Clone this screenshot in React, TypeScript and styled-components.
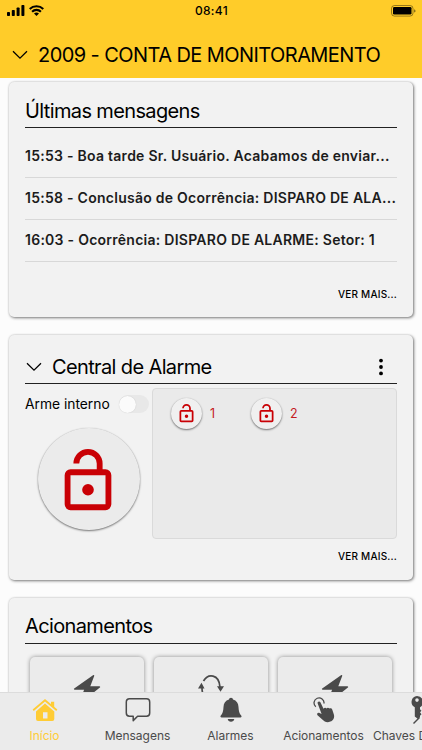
import React from "react";
import styled, { createGlobalStyle } from "styled-components";

const GlobalStyle = createGlobalStyle`
  * { box-sizing: border-box; }
  body { margin: 0; background: #fcfcfc; overflow: hidden; font-family: Inter, "Liberation Sans", sans-serif; color: #000; }
  svg { display: block; flex: none; }
`;

const Screen = styled.div`
  width: 422px;
  height: 750px;
  display: flex;
  flex-direction: column;
  overflow: hidden;
  background: #fcfcfc;
`;

const Header = styled.header`
  flex: none;
  height: 78px;
  background: #ffcc29;
`;

const StatusBar = styled.div`
  display: grid;
  grid-template-columns: 1fr auto 1fr;
  align-items: center;
  height: 21px;
  padding: 0 6px 0 7px;
`;

const StatusGroup = styled.div<{ $end?: boolean }>`
  display: flex;
  align-items: center;
  gap: 4px;
  justify-content: ${(p) => (p.$end ? "flex-end" : "flex-start")};
`;

const Clock = styled.span`
  font-size: 12px;
  font-weight: 500;
  letter-spacing: 0.35px;
`;

const AccountRow = styled.div`
  display: flex;
  align-items: center;
  gap: 10px;
  height: 30px;
  margin-top: 19px;
  padding-left: 12px;
`;

const Heading = styled.h1`
  margin: 0;
  font-size: 20px;
  line-height: 26px;
  font-weight: 400;
  white-space: nowrap;
  letter-spacing: -0.57px;
`;

const CardTitle = styled(Heading).attrs({ as: "h2" })`
  letter-spacing: -0.63px;
`;

const Content = styled.main`
  flex: 1;
  min-height: 0;
  overflow: hidden;
  display: flex;
  flex-direction: column;
  gap: 18px;
  padding: 4px 9px 0;
`;

const Card = styled.section<{ $height: number; $top?: number }>`
  flex: none;
  display: flex;
  flex-direction: column;
  height: ${(p) => p.$height}px;
  padding: ${(p) => p.$top ?? 14}px 16px 0;
  border-radius: 5px;
  background: #f2f2f2;
  box-shadow: 1px 1px 3px rgba(0, 0, 0, 0.5), 0 0 2px rgba(0, 0, 0, 0.15);
`;

const CardHeader = styled.div<{ $bottom?: number }>`
  flex: none;
  display: flex;
  align-items: center;
  gap: 10px;
  height: 32px;
  padding: 0 0 ${(p) => p.$bottom ?? 1}px;
  border-bottom: 1px solid #222;
`;

const ExpandButton = styled.button`
  margin-left: 1px;
  padding: 0;
  border: 0;
  background: none;
`;

const MenuButton = styled.button`
  margin-left: auto;
  padding: 0 14px 0 0;
  border: 0;
  background: none;
`;

const MessageList = styled.ul`
  margin: 8px 0 0;
  padding: 0;
  list-style: none;
`;

const Message = styled.li`
  height: 42px;
  line-height: 39px;
  border-bottom: 1px solid #d8d8d8;
  font-size: 14px;
  font-weight: 600;
  letter-spacing: 0.26px;
  color: #1c1c1c;
  white-space: nowrap;
`;

const MoreLink = styled.button<{ $top: number }>`
  align-self: flex-end;
  margin-top: ${(p) => p.$top}px;
  padding: 0;
  border: 0;
  background: none;
  font: 500 10px/16px Inter, sans-serif;
  letter-spacing: 0.2px;
  color: #000;
`;

const AlarmBody = styled.div`
  display: grid;
  grid-template-columns: 127px 245px;
  height: 155px;
`;

const ArmColumn = styled.div`
  display: flex;
  flex-direction: column;
`;

const ArmRow = styled.div`
  display: flex;
  align-items: center;
  height: 20px;
  margin-top: 10px;
  font-size: 13.8px;
  white-space: nowrap;
`;

const ArmLabel = styled.span`
  width: 94px;
`;

const Toggle = styled.span`
  display: flex;
  align-items: center;
  width: 30px;
  height: 18px;
  border-radius: 9px;
  background: #e8e8e8;
`;

const Knob = styled.span`
  width: 17px;
  height: 17px;
  border-radius: 50%;
  background: #fbfbfb;
  box-shadow: 0 0 1px rgba(0, 0, 0, 0.2);
`;

const LockButton = styled.button<{ $size: number; $big?: boolean }>`
  flex: none;
  display: flex;
  align-items: center;
  justify-content: center;
  width: ${(p) => p.$size}px;
  height: ${(p) => p.$size}px;
  margin: ${(p) => (p.$big ? "14px 0 0 12.5px" : "0")};
  padding: ${(p) => (p.$big ? "3px 1px 0 0" : "0")};
  border: 0;
  border-radius: 50%;
  background: ${(p) => (p.$big ? "#ebebeb" : "#f0f0f0")};
  box-shadow: 0 1px 2px rgba(0, 0, 0, 0.5), 0 0 1px rgba(0, 0, 0, 0.15);
`;

const SectorPanel = styled.div`
  display: flex;
  align-items: flex-start;
  gap: 35px;
  height: 151px;
  margin-top: 4px;
  padding: 9px 18px;
  border: 1px solid #dadada;
  border-radius: 4px;
  background: #eaeaea;
`;

const Sector = styled.div`
  display: flex;
  align-items: center;
  gap: 8px;
  width: 45px;
  color: #c51a1f;
  font-size: 12.5px;
`;

const ActionGrid = styled.div`
  display: grid;
  grid-template-columns: repeat(3, 114px);
  gap: 10px;
  margin: 13px 0 0 5px;
`;

const ActionTile = styled.button`
  display: flex;
  justify-content: center;
  height: 90px;
  padding: 17px 0 0;
  border: 0;
  border-radius: 5px;
  background: #ebebeb;
  box-shadow: 0 0 4px rgba(0, 0, 0, 0.42);
`;

const TabBar = styled.nav`
  flex: none;
  display: grid;
  grid-template-columns: repeat(5, 93px);
  height: 58px;
  margin-left: -2px;
  border-top: 1px solid #dcdcdc;
  background: #ebebeb;
`;

const Tab = styled.a<{ $active?: boolean }>`
  display: flex;
  flex-direction: column;
  align-items: center;
  color: ${(p) => (p.$active ? "#ffcc35" : "#4a4a4a")};
`;

const TabIcon = styled.span`
  display: flex;
  align-items: center;
  height: 34px;
`;

const TabLabel = styled.span`
  height: 18px;
  line-height: 18px;
  font-size: 12px;
  letter-spacing: -0.03px;
  white-space: nowrap;
`;

const Chevron = () => (
  <svg width="16" height="10" viewBox="0 0 16 10" fill="none" stroke="#000" strokeWidth="1.25">
    <path d="M1 1.2 8 8.2 15 1.2" />
  </svg>
);

const LockIcon = ({ size }: { size: number }) => (
  <svg width={size} height={size} viewBox="0 0 24 24" fill="#c90005">
    <path d="M18 20V10H6V20H18M18 8A2 2 0 0 1 20 10V20A2 2 0 0 1 18 22H6A2 2 0 0 1 4 20V10A2 2 0 0 1 6 8H15V6A3 3 0 0 0 9 6H7A5 5 0 0 1 17 6V8H18M12 17A2 2 0 1 1 12 13A2 2 0 0 1 12 17Z" />
  </svg>
);

const SignalIcon = () => (
  <svg width="18" height="11" viewBox="0 0 18 11">
    <rect x="0" y="7" width="3" height="4" rx=".8" />
    <rect x="4.8" y="5" width="3" height="6" rx=".8" />
    <rect x="9.6" y="2.5" width="3" height="8.5" rx=".8" />
    <rect x="14.4" y="0" width="3" height="11" rx=".8" />
  </svg>
);

const WifiIcon = () => (
  <svg width="15" height="11" viewBox="0 0 15 11" fill="none" stroke="#000" strokeWidth="2.1">
    <path d="M.7 4a9.7 9.7 0 0 1 13.6 0M3.1 6.7a6.2 6.2 0 0 1 8.800 0" />
    <path d="M7.5 11 5 8.6a3.6 3.6 0 0 1 5 0Z" fill="#000" stroke="none" />
  </svg>
);

const BatteryIcon = () => (
  <svg width="25" height="12" viewBox="0 0 25 12">
    <rect x=".5" y=".5" width="21.5" height="10.6" rx="3" fill="none" stroke="#000" strokeOpacity=".5" strokeWidth=".8" />
    <rect x="2" y="2" width="18.5" height="7.6" rx="1.3" />
    <path d="M23.3 4.2v3.4c1.5-.5 1.5-2.9 0-3.4" fillOpacity=".65" />
  </svg>
);

const DotsIcon = () => (
  <svg width="4" height="18" viewBox="0 0 4 18">
    <circle cx="2" cy="2.6" r="1.9" />
    <circle cx="2" cy="9" r="1.9" />
    <circle cx="2" cy="15.4" r="1.9" />
  </svg>
);

const BoltIcon = () => (
  <svg width="28" height="30" viewBox="0 0 28 30" fill="#4a4a4a">
    <path d="M20 1.2C20.6.6 21.5 1.1 21.2 1.9L17.3 12.2H26.4C27.2 12.2 27.5 13 26.9 13.6L7.7 28.6C7 29.2 6.1 28.5 6.5 27.7L11.1 15.8H1.7C.9 15.8.6 15 1.2 14.4Z" />
  </svg>
);

const CycleIcon = () => (
  <svg width="28" height="30" viewBox="0 0 28 30" fill="none" stroke="#4a4a4a" strokeWidth="1.7">
    <path d="M6.5 7C11-.8 22-.2 23 13M5 14c0 12 12 17 18 9" />
    <path d="m1 14.5 3.5-5.8L7.5 14.5ZM20 12.300h7L23.5 17.800Z" fill="#4a4a4a" stroke="none" />
  </svg>
);

const HomeIcon = () => (
  <svg width="26" height="24" viewBox="0 0 26 24" fill="currentColor">
    <path d="M1.2 12.2 13 2.2 24.8 12.2" fill="none" stroke="currentColor" strokeWidth="1.8" />
    <path d="M19 3.7h3.2v6L19 7ZM13 5.5 22.3 13.4V21q0 2-2 2H6q-2 0-2-2v-7.6ZM11 14.2v6.3h4.5v-6.3Z" fillRule="evenodd" />
  </svg>
);

const ChatIcon = () => (
  <svg width="26" height="26" viewBox="0 0 26 26" fill="none" stroke="currentColor" strokeWidth="1.5" strokeLinejoin="round">
    <path d="M4.5 1.800h17a3.200 3.200 0 0 1 3.200 3.200v11a3.200 3.200 0 0 1-3.200 3.200H12.600L8.200 23.600v-4.400H4.500a3.200 3.200 0 0 1-3.200-3.200V5A3.200 3.200 0 0 1 4.500 1.800Z" />
  </svg>
);

const BellIcon = () => (
  <svg width="22" height="26" viewBox="0 0 22 26" fill="currentColor">
    <path d="M11 .8c1.1 0 1.9.7 2 1.8 3.6.9 5.3 3.7 5.5 7.3.2 4 .8 6.6 2.7 8.5.8.9.3 2-.8 2H1.6c-1.1 0-1.6-1.1-.8-2 1.9-1.9 2.5-4.5 2.7-8.5.2-3.6 1.9-6.4 5.5-7.3.1-1.1.9-1.8 2-1.8ZM7.7 22h6.6c-.3 1.8-1.6 2.8-3.3 2.8S8 23.8 7.7 22Z" />
  </svg>
);

const TapIcon = () => (
  <svg width="22" height="26" viewBox="0 0 22 26" fill="currentColor">
    <path d="M2.8 9.7A5 5 0 1 1 11 6.5" fill="none" stroke="currentColor" strokeWidth="1.3" />
    <path d="M4.6 6.2c-.4-1.7 2-2.6 2.8-.9l3.1 6.400c.8-1.300 2.300-1.400 3-.3.900-1 2.300-.8 2.900.2 1-.7 2.400-.2 2.900 1.100l1.500 4.500c1.100 3.500-.4 6.200-3.500 7.400-3.400 1.300-5.800.1-8-2.100l-4.800-4.300c-1.100-1.200.3-3 2-2.200l2.100 1Z" />
  </svg>
);

const KeyIcon = () => (
  <svg width="14" height="30" viewBox="0 0 14 30" fill="currentColor">
    <path fillRule="evenodd" d="M7 1a6 6 0 0 1 3 11.2v2l1.5 1.5-1.5 1.5 1.5 2-1.5 1.6v1.3L8 24l-3.2-2.5v-9.2A6 6 0 0 1 7 1Zm0 2.300a1.800 1.800 0 1 0 0 3.600 1.800 1.800 0 0 0 0-3.600Z" />
    <path d="m9.5 22.5-6 6" stroke="currentColor" strokeWidth="1.5" />
  </svg>
);

const messages = [
  "15:53 - Boa tarde Sr. Usuário. Acabamos de enviar...",
  "15:58 - Conclusão de Ocorrência: DISPARO DE ALA...",
  "16:03 - Ocorrência: DISPARO DE ALARME: Setor: 1",
];

const tabs = [
  { label: "Início", icon: <HomeIcon />, active: true },
  { label: "Mensagens", icon: <ChatIcon /> },
  { label: "Alarmes", icon: <BellIcon /> },
  { label: "Acionamentos", icon: <TapIcon /> },
  { label: "Chaves Digitais", icon: <KeyIcon /> },
];

export default function App() {
  return (
    <Screen>
      <GlobalStyle />
      <Header>
        <StatusBar>
          <StatusGroup><SignalIcon /><WifiIcon /></StatusGroup>
          <Clock>08:41</Clock>
          <StatusGroup $end><BatteryIcon /></StatusGroup>
        </StatusBar>
        <AccountRow>
          <Chevron />
          <Heading>2009 - CONTA DE MONITORAMENTO</Heading>
        </AccountRow>
      </Header>
      <Content>
        <Card $height={235}>
          <CardHeader><CardTitle>Últimas mensagens</CardTitle></CardHeader>
          <MessageList>
            {messages.map((m) => <Message key={m}>{m}</Message>)}
          </MessageList>
          <MoreLink $top={24}>VER MAIS...</MoreLink>
        </Card>
        <Card $height={245} $top={17}>
          <CardHeader>
            <ExpandButton aria-label="Recolher"><Chevron /></ExpandButton>
            <CardTitle>Central de Alarme</CardTitle>
            <MenuButton aria-label="Opções"><DotsIcon /></MenuButton>
          </CardHeader>
          <AlarmBody>
            <ArmColumn>
              <ArmRow>
                <ArmLabel>Arme interno</ArmLabel>
                <Toggle><Knob /></Toggle>
              </ArmRow>
              <LockButton $size={102} $big aria-label="Armar"><LockIcon size={70} /></LockButton>
            </ArmColumn>
            <SectorPanel>
              {[1, 2].map((n) => (
                <Sector key={n}>
                  <LockButton $size={31} aria-label={`Setor ${n}`}><LockIcon size={21} /></LockButton>
                  {n}
                </Sector>
              ))}
            </SectorPanel>
          </AlarmBody>
          <MoreLink $top={9}>VER MAIS...</MoreLink>
        </Card>
        <Card $height={170}>
          <CardHeader $bottom={3}><CardTitle>Acionamentos</CardTitle></CardHeader>
          <ActionGrid>
            <ActionTile aria-label="Acionamento 1"><BoltIcon /></ActionTile>
            <ActionTile aria-label="Acionamento 2"><CycleIcon /></ActionTile>
            <ActionTile aria-label="Acionamento 3"><BoltIcon /></ActionTile>
          </ActionGrid>
        </Card>
      </Content>
      <TabBar>
        {tabs.map((t) => (
          <Tab key={t.label} $active={t.active}>
            <TabIcon>{t.icon}</TabIcon>
            <TabLabel>{t.label}</TabLabel>
          </Tab>
        ))}
      </TabBar>
    </Screen>
  );
}
